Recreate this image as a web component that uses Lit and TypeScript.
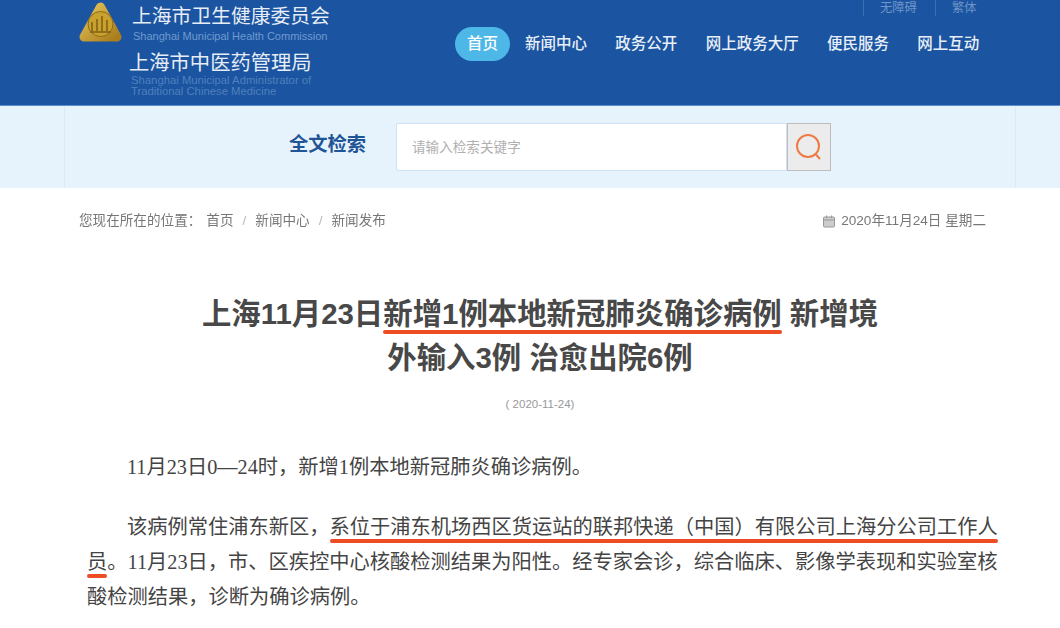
import { LitElement, html, css } from "lit";
import { customElement } from "lit/decorators.js";

@customElement("app-root")
export class AppRoot extends LitElement {
  static styles = css`
    :host { display: block; width: 1060px; height: 628px; overflow: hidden; background: #fff; font-family: "Liberation Sans", "Noto Sans CJK SC", sans-serif; }
    .soft { filter: blur(0.45px); }
    .header { height: 105px; background: #1b54a0; display: flex; color: #fff; border-bottom: 1px solid #5b8fd0; }
    .logo { margin: 2px 0 0 78px; width: 45px; height: 41px; flex: none; }
    .brand { margin-left: 9px; width: 323px; flex: none; display: flex; flex-direction: column; }
    .cn { font-size: 19.8px; line-height: 24px; margin-top: 4px; color: #e6edf6; white-space: nowrap; }
    .en { font-size: 11px; line-height: 11px; color: #6f9bd0; white-space: nowrap; margin-top: 3px; margin-left: 1px; }
    .cn2 { margin-top: 9px; margin-left: -3px; font-size: 20.3px; }
    .en2 { margin-left: -1px; margin-top: 0; color: #4f80bd; font-size: 11.3px; }
    .right { display: flex; flex-direction: column; }
    .top { display: flex; font-size: 12.3px; color: #6f96c8; line-height: 16px; margin-left: 408px; }
    .top span { padding-left: 16px; border-left: 1px solid #3a6fb2; margin-right: 17px; width: 38px; white-space: nowrap; }
    .nav { display: flex; align-items: center; font-size: 15.5px; color: #e8eff8; font-weight: 500; margin-top: 11px; }
    .nav a { margin-right: 28.3px; line-height: 34px; white-space: nowrap; }
    .nav a.on { background: #4db8e8; color: #fff; border-radius: 17px; padding: 0 12px; margin-right: 15px; }
    .search { height: 82px; background: #e6f2fc; }
    .inner { margin-left: 64px; width: 952px; height: 82px; border-left: 1px solid #dde9f3; border-right: 1px solid #dde9f3; display: flex; align-items: center; box-sizing: border-box; }
    .lab { margin-left: 224px; margin-bottom: 8px; width: 107px; font-size: 19.3px; font-weight: 700; color: #1f5596; }
    .box { width: 391px; height: 48px; box-sizing: border-box; background: #fff; border: 1px solid #cfe2f5; border-radius: 2px 0 0 2px; display: flex; align-items: center; font-size: 13.6px; color: #b0b0b0; padding: 0 0 3px 15px; }
    .btn { width: 44px; height: 48px; box-sizing: border-box; background: #ececec; border: 1px solid #bdbdbd; display: flex; align-items: center; justify-content: center; }
    .crumb { display: flex; justify-content: space-between; padding: 0 74px 0 79px; height: 20px; margin-top: 23px; font-size: 13.6px; line-height: 20px; color: #777; }
    .crumb i { font-style: normal; color: #bbb; margin: 0 9px; }
    .here { margin-right: 5px; }
    .date { display: flex; align-items: center; gap: 6px; }
    h1 { margin: 61px 0 0 180px; width: 720px; text-align: center; font-size: 29.4px; line-height: 44px; font-weight: 700; color: #484848; }
    .mark { position: relative; }
    .mark::after { content: ""; position: absolute; left: 0; right: 0; bottom: -4px; height: 4px; border-radius: 2px; background: #ee4c22; }
    .pub { margin: 17px 0 0 180px; width: 720px; text-align: center; font-size: 11.5px; color: #999; line-height: 14px; }
    .body { margin: 39px 0 0 87px; width: 912px; font-family: "Liberation Serif", "Noto Sans CJK SC", serif; font-size: 20.25px; line-height: 35px; color: #444; }
    .body p { margin: 0 0 25px; text-indent: 40px; }
    .body .mark::after { bottom: -5px; height: 4px; }
  `;
  render() {
    return html`
      <div class="soft">
        <div class="header">
          <svg class="logo" viewBox="0 0 45 41">
            <defs><linearGradient id="g" x1="0" y1="0" x2="1" y2="1"><stop offset="0" stop-color="#e3c35a"/><stop offset="1" stop-color="#a97d1c"/></linearGradient></defs>
            <path d="M22.500 5 L39 35 H6 Z" fill="url(#g)" stroke="url(#g)" stroke-width="9" stroke-linejoin="round"/>
            <circle cx="22.500" cy="22" r="12.500" fill="#c9a22e" stroke="#8c6a18"/>
            <path d="M14 29V20M19 29V17M24 29V14M29 29V18M12 30H33" stroke="#7d5e14" stroke-width="1.500" fill="none"/>
          </svg>
          <div class="brand">
            <div class="cn">上海市卫生健康委员会</div>
            <div class="en">Shanghai Municipal Health Commission</div>
            <div class="cn cn2">上海市中医药管理局</div>
            <div class="en en2">Shanghai Municipal Administrator of<br>Traditional Chinese Medicine</div>
          </div>
          <div class="right">
            <div class="top"><span>无障碍</span><span>繁体</span></div>
            <div class="nav">
              <a class="on">首页</a><a>新闻中心</a><a>政务公开</a><a>网上政务大厅</a><a>便民服务</a><a>网上互动</a>
            </div>
          </div>
        </div>
        <div class="search"><div class="inner">
          <div class="lab">全文检索</div>
          <div class="box">请输入检索关键字</div>
          <div class="btn"><svg width="30" height="30" viewBox="0 0 30 30" fill="none" stroke="#ee7a45" stroke-width="2"><circle cx="14" cy="14" r="11"/><path d="M21.500 22L26 27"/></svg></div>
        </div></div>
        <div class="crumb">
          <div><span class="here">您现在所在的位置：</span>首页<i>/</i>新闻中心<i>/</i>新闻发布</div>
          <div class="date"><svg width="12" height="13" viewBox="0 0 12 13" fill="#ccc" stroke="#999"><rect x=".5" y="2" width="11" height="10" rx="1"/><path d="M.5 5H11.500M3.500 .5V3M8.500 .5V3"/></svg>2020年11月24日 星期二</div>
        </div>
      </div>
      <h1>上海11月23日<span class="mark">新增1例本地新冠肺炎确诊病例</span> 新增境<br>外输入3例 治愈出院6例</h1>
      <div class="pub">( 2020-11-24)</div>
      <div class="body">
        <p>11月23日0—24时，新增1例本地新冠肺炎确诊病例。</p>
        <p>该病例常住浦东新区，<span class="mark">系位于浦东机场西区货运站的联邦快递（中国）有限公司上海分公司工作人</span><br><span class="mark">员</span>。11月23日，市、区疾控中心核酸检测结果为阳性。经专家会诊，综合临床、影像学表现和实验室核<br>酸检测结果，诊断为确诊病例。</p>
      </div>`;
  }
}
